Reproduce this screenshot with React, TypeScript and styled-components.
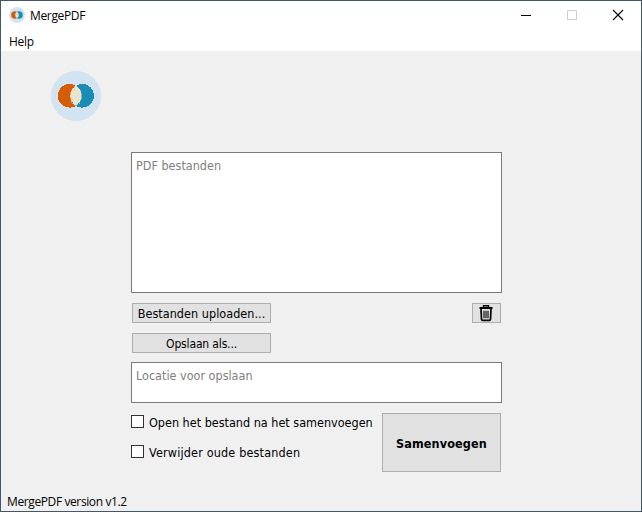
import React from 'react';
import styled, { createGlobalStyle } from 'styled-components';

const GlobalStyle = createGlobalStyle`
  * { box-sizing: border-box; }
  body { margin: 0; }
`;

const Window = styled.div`
  width: 642px;
  height: 512px;
  border: 1px solid #44576a;
  background: #f0f0f0;
  display: flex;
  flex-direction: column;
  overflow: hidden;
  color: #000;
  font-family: 'DejaVu Sans Condensed', 'DejaVu Sans', sans-serif;
  font-stretch: condensed;
  font-size: 12.5px;
  line-height: 16px;
`;

const Label = styled.span<{ $spacing?: number; $size?: number }>`
  white-space: nowrap;
  letter-spacing: ${p => p.$spacing ?? 0}px;
  ${p => (p.$size ? `font-size: ${p.$size}px;` : '')}
`;

const TitleBar = styled.header`
  height: 30px;
  flex: none;
  display: flex;
  align-items: flex-start;
  background: #fff;
  padding: 6px 17px 0 8px;
  font-family: 'Open Sans', 'Noto Sans', sans-serif;
  font-stretch: normal;
`;

const TitleText = styled.h1`
  margin: 0 auto 0 5px;
  font-size: 12px;
  font-weight: 400;
  line-height: 17px;
`;

const WindowControls = styled.div`
  display: flex;
  gap: 34px;
  padding-top: 2px;
`;

const ControlIcon = styled.svg`
  display: block;
  width: 12px;
  height: 12px;
`;

const MenuBar = styled.nav`
  height: 20px;
  flex: none;
  background: #fff;
  padding: 3px 8px 0;
  font-family: 'Open Sans', 'Noto Sans', sans-serif;
  font-stretch: normal;
  font-size: 12px;
`;

const Content = styled.main`
  flex: 1;
  display: flex;
  flex-direction: column;
  padding-top: 20px;
`;

const LogoArea = styled.div`
  height: 81px;
  padding-left: 50px;
`;

const LogoSvg = styled.svg`
  display: block;
`;

const Form = styled.div`
  width: 371px;
  margin-left: 130px;
`;

const Field = styled.div<{ $height: number }>`
  height: ${p => p.$height}px;
  background: #fff;
  border: 1px solid #7a7a7a;
  color: #808080;
  padding: 5px 4px;
`;

const Actions = styled.div`
  display: grid;
  grid-template-columns: 139px 29px;
  justify-content: space-between;
  row-gap: 10px;
  padding: 10px 1px 9px;
`;

const Button = styled.button<{ $height: number; $strong?: boolean }>`
  height: ${p => p.$height}px;
  width: 100%;
  padding: ${p => (p.$strong ? '2px 0 0' : '1px 0 0')};
  border: 1px solid #adadad;
  background: #e1e1e1;
  color: inherit;
  font: inherit;
  font-weight: ${p => (p.$strong ? 700 : 400)};
  display: flex;
  align-items: center;
  justify-content: center;
`;

const TrashButton = styled(Button)`
  padding: 0 1px 0 0;
`;

const Bottom = styled.div`
  display: grid;
  grid-template-columns: 1fr 119px;
  padding: 10px 1px 0 0;
`;

const Options = styled.div`
  display: flex;
  flex-direction: column;
  gap: 14px;
  padding-top: 2px;
`;

const Option = styled.label`
  display: flex;
  height: 16px;
  gap: 5px;
  align-items: flex-start;
`;

const Checkbox = styled.input`
  appearance: none;
  flex: none;
  width: 13px;
  height: 13px;
  margin: 0;
  border: 1px solid #333;
  background: #fff;
`;

const StatusBar = styled.footer`
  height: 17px;
  flex: none;
  padding: 0 6px;
  font-family: 'Open Sans', 'Noto Sans', sans-serif;
  font-stretch: normal;
  font-size: 12px;
`;

function Logo({ size, crisp }: { size: number; crisp?: boolean }) {
  return (
    <LogoSvg width={size} height={size} viewBox="0 0 50 50" shapeRendering={crisp ? 'crispEdges' : 'auto'}>
      <circle cx="25" cy="25" r="25" fill="#d2e4f2" />
      <circle cx="18.6" cy="24.8" r="11.8" fill="#d65d04" />
      <circle cx="31.2" cy="24.8" r="11.8" fill="#1b8db5" />
      <path d="M24.9 14.8A11.8 11.8 0 0 0 24.9 34.8A11.8 11.8 0 0 0 24.9 14.8Z" fill="#ebe3cc" stroke="#ebe3cc" strokeWidth="0.5" />
      <path d="M23.2 13h3.4L24.9 15.4ZM23.2 36.6h3.4L24.9 34.2Z" fill="#d2e4f2" />
    </LogoSvg>
  );
}

function TrashIcon() {
  return (
    <svg width="14" height="18" viewBox="0 0 14 18" fill="none" stroke="#000">
      <path d="M4.5 3.5V1.7h5v1.8" strokeWidth="1.4" />
      <path d="M0.5 4h13" strokeWidth="2" />
      <path d="M2 5l.5 10.3q.1 1 1.1 1h6.8q1 0 1.1-1L12 5" strokeWidth="1.7" />
      <path d="M5 6.8v7.4M7 6.8v7.4M9 6.8v7.4" strokeWidth="1.1" />
    </svg>
  );
}

export default function App() {
  return (
    <>
      <GlobalStyle />
      <Window>
        <TitleBar>
          <Logo size={16} />
          <TitleText><Label $spacing={-0.35}>MergePDF</Label></TitleText>
          <WindowControls>
            <ControlIcon viewBox="0 0 12 12"><path d="M1 6.5h10" stroke="#000" /></ControlIcon>
            <ControlIcon viewBox="0 0 12 12"><path d="M1.5 1.5h9v9h-9z" fill="none" stroke="#ccc" /></ControlIcon>
            <ControlIcon viewBox="0 0 12 12"><path d="M1 1l10 10M11 1L1 11" stroke="#000" strokeWidth="1.1" /></ControlIcon>
          </WindowControls>
        </TitleBar>
        <MenuBar><Label $spacing={-0.25}>Help</Label></MenuBar>
        <Content>
          <LogoArea><Logo size={50} crisp /></LogoArea>
          <Form>
            <Field $height={141}><Label>PDF bestanden</Label></Field>
            <Actions>
              <Button $height={20}><Label $spacing={0.04}>Bestanden uploaden...</Label></Button>
              <TrashButton $height={20} aria-label="Verwijderen"><TrashIcon /></TrashButton>
              <Button $height={20}><Label $spacing={-0.15} $size={12}>Opslaan als...</Label></Button>
            </Actions>
            <Field $height={41}><Label>Locatie voor opslaan</Label></Field>
            <Bottom>
              <Options>
                <Option><Checkbox type="checkbox" /><Label>Open het bestand na het samenvoegen</Label></Option>
                <Option><Checkbox type="checkbox" /><Label $spacing={0.17}>Verwijder oude bestanden</Label></Option>
              </Options>
              <Button $height={59} $strong><Label $spacing={0.13}>Samenvoegen</Label></Button>
            </Bottom>
          </Form>
        </Content>
        <StatusBar><Label $spacing={-0.39}>MergePDF version v1.2</Label></StatusBar>
      </Window>
    </>
  );
}
